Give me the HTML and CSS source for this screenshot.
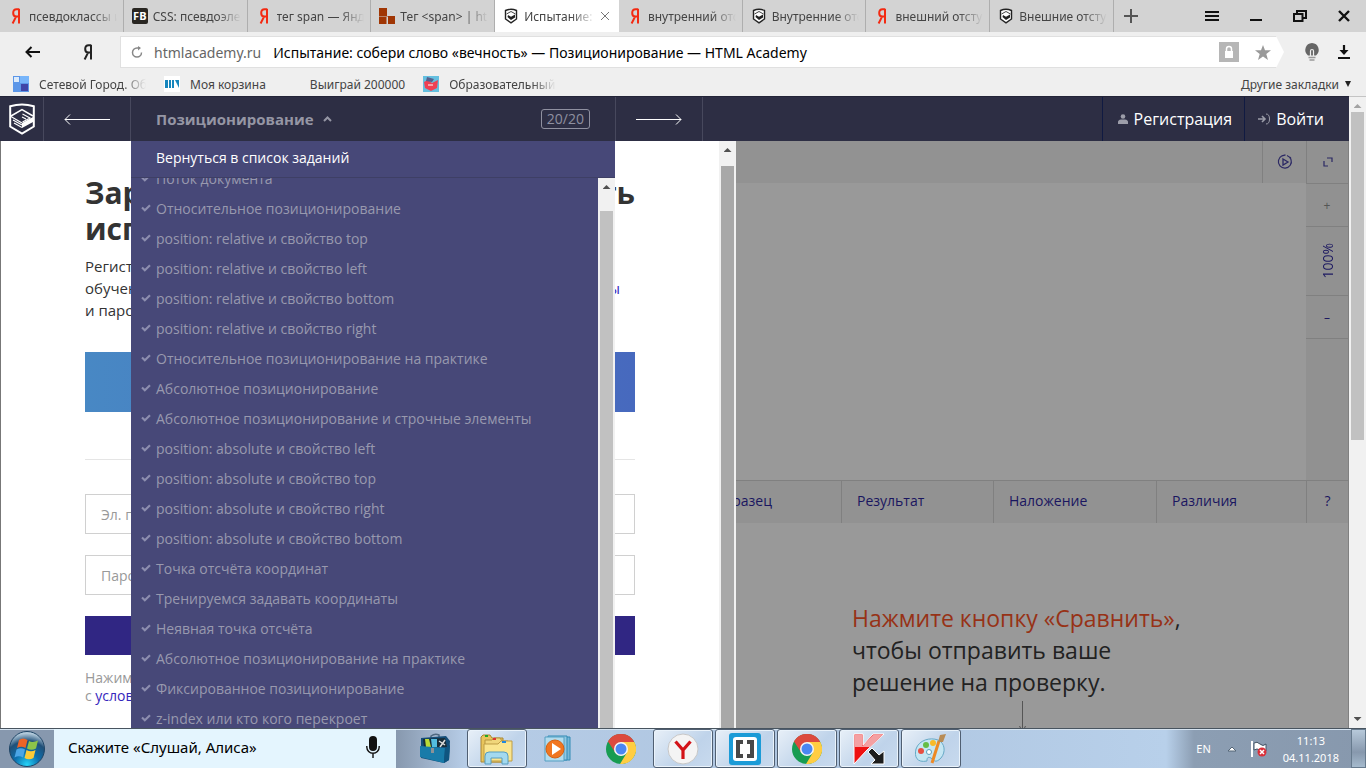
FILE: index.html
```html
<!DOCTYPE html>
<html lang="ru">
<head>
<meta charset="utf-8">
<title>Испытание: собери слово «вечность» — HTML Academy</title>
<link rel="stylesheet" href="styles.css">
</head>
<body>
<svg class="sprite" aria-hidden="true">
  <symbol id="ya" viewBox="0 0 10 16"><path d="M8 .8V15.5M8 1.2H5.6C3.3 1.2 2.2 2.7 2.2 4.9S3.4 8.4 5.4 8.4H8M5.2 8.4L1.6 15.5" fill="none" stroke="currentColor" stroke-width="2"/></symbol>
  <symbol id="academy" viewBox="0 0 26 32"><path d="M1.2 3.2Q13-.2 24.8 3.2V23.5L13 30.5 1.2 23.5Z" fill="none" stroke="currentColor" stroke-width="2"/><path d="M2 13L13 6.500 24 13" fill="none" stroke="currentColor" stroke-width="1.500"/><path d="M13 20L24 14V19L13 25Z" fill="currentColor"/><path d="M2 13.500L13 20M4 17L13 22M5 20L13 24.600M13.500 11L21 15 13.500 19M13 14L17 16" fill="none" stroke="currentColor" stroke-width="1.200"/></symbol>
  <symbol id="badge" viewBox="0 0 14 16"><path d="M1.500 2.500Q7 0 12.500 2.500V11L7 14.800 1.500 11Z" fill="#fff" stroke="#222" stroke-width="1.400"/><path d="M2.500 6L7 3.500 11.500 6" fill="none" stroke="#444"/><path d="M4 7L7 8.800 11 6.500V9.500L7 12 3.500 9Z" fill="#222"/></symbol>
  <symbol id="check" viewBox="0 0 10 8"><path d="M1 3.500L3.800 6.300 9 1.200" fill="none" stroke="currentColor" stroke-width="2.100"/></symbol>
  <symbol id="chrome" viewBox="0 0 30 30"><circle cx="15" cy="15" r="15" fill="#179c52"/><path d="M15 15L2 7.500A15 15 0 0 1 28 7.500Z" fill="#dc4a3e"/><path d="M15 8H28.300A15 15 0 0 1 14 30L21 18.500Z" fill="#ffcd42"/><path d="M2 7.500L9.500 19 15 8H28A15 15 0 0 0 2 7.500Z" fill="#dc4a3e"/><circle cx="15" cy="15" r="7" fill="#f5f5f5"/><circle cx="15" cy="15" r="5.500" fill="#4a87f2"/></symbol>
</svg>

<header class="browser">
  <div class="tabbar">
    <nav class="tabs" aria-label="Вкладки">
      <a class="tab" href="#"><svg class="fav ya"><use href="#ya"/></svg><span class="fade">псевдоклассы и</span></a>
      <a class="tab" href="#"><span class="fav fb">FB</span><span class="fade">CSS: псевдоэлем</span></a>
      <a class="tab" href="#"><svg class="fav ya"><use href="#ya"/></svg><span class="fade">тег span — Яндекс</span></a>
      <a class="tab" href="#"><svg class="fav" viewBox="0 0 16 16"><path d="M0 0H8V8H16V16H9V8.500H7.500V16H0V8.500H7.500V8H0Z" fill="#a03604"/></svg><span class="fade">Тег &lt;span&gt; | html</span></a>
      <a class="tab active" href="#"><svg class="fav"><use href="#badge"/></svg><span class="fade">Испытание: с</span><svg class="close" viewBox="0 0 10 10"><path d="M1 1L9 9M9 1L1 9" stroke="#777" fill="none"/></svg></a>
      <a class="tab" href="#"><svg class="fav ya"><use href="#ya"/></svg><span class="fade">внутренний отступ</span></a>
      <a class="tab" href="#"><svg class="fav"><use href="#badge"/></svg><span class="fade">Внутренние отст</span></a>
      <a class="tab" href="#"><svg class="fav ya"><use href="#ya"/></svg><span class="fade">внешний отступ</span></a>
      <a class="tab" href="#"><svg class="fav"><use href="#badge"/></svg><span class="fade">Внешние отступы</span></a>
    </nav>
    <button class="icon-btn plus" aria-label="Новая вкладка"><svg width="14" height="14" viewBox="0 0 14 14"><path d="M7 0V14M0 7H14" stroke="#555" stroke-width="2"/></svg></button>
    <div class="window-controls">
      <button class="icon-btn" aria-label="Меню"><svg width="14" height="12" viewBox="0 0 14 12"><path d="M0 2H14M0 6H14M0 10H14" stroke="#111" stroke-width="2"/></svg></button>
      <button class="icon-btn" aria-label="Свернуть"><svg width="14" height="12" viewBox="0 0 14 12"><path d="M1 10H13" stroke="#111" stroke-width="2"/></svg></button>
      <button class="icon-btn" aria-label="Окно"><svg width="14" height="12" viewBox="0 0 14 12"><path d="M1 4H9.500V11H1ZM4 4V1H13V8H10" fill="none" stroke="#111" stroke-width="2"/></svg></button>
      <button class="icon-btn" aria-label="Закрыть"><svg width="12" height="12" viewBox="0 0 12 12"><path d="M1 1L11 11M11 1L1 11" stroke="#111" stroke-width="2.400"/></svg></button>
    </div>
  </div>

  <div class="navbar">
    <button class="icon-btn" aria-label="Назад"><svg width="15" height="12" viewBox="0 0 15 12"><path d="M15 6H2M6.500 1L1.500 6 6.500 11" fill="none" stroke="#111" stroke-width="2"/></svg></button>
    <button class="icon-btn" aria-label="Яндекс"><svg class="ya-dark"><use href="#ya"/></svg></button>
    <div class="address">
      <svg width="12" height="12" viewBox="0 0 12 12"><path d="M10.500 6.500A4.500 4.500 0 1 1 6 2H9" fill="none" stroke="#888" stroke-width="1.500"/><path d="M7 0L10 2 7 4.500Z" fill="#888"/></svg>
      <span class="host">htmlacademy.ru</span>
      <span class="title">Испытание: собери слово «вечность» — Позиционирование — HTML Academy</span>
      <svg class="lock" viewBox="0 0 20 20"><path d="M0 0H20V20H0Z" fill="#b6b6b6"/><path d="M6 9H14V16H6Z" fill="#fff"/><path d="M7.500 9V7A2.500 2.500 0 0 1 12.500 7V9" fill="none" stroke="#fff" stroke-width="1.500"/></svg>
      <svg width="16" height="15" viewBox="0 0 16 15"><path d="M8 0L10 5.300H16L11.300 8.900 13 15 8 11.500 3 15 4.700 8.900 0 5.300H6Z" fill="#999"/></svg>
    </div>
    <button class="icon-btn" aria-label="Подсказка"><svg width="16" height="18" viewBox="0 0 16 18"><path d="M8 0A7 7 0 0 0 4 12.500H12A7 7 0 0 0 8 0Z" fill="#666"/><path d="M6.500 13V8A1.500 1.500 0 0 1 9.500 8V13" fill="none" stroke="#eee" stroke-width="1.200"/><path d="M4.500 14.500H11.500M5.500 17H10.500" stroke="#999" stroke-width="1.600"/></svg></button>
    <button class="icon-btn" aria-label="Загрузки"><svg width="12" height="14" viewBox="0 0 12 14"><path d="M6 0V7M0 13H12" stroke="#111" stroke-width="2.200"/><path d="M1.500 5H10.500L6 10Z" fill="#111"/></svg></button>
  </div>

  <nav class="bookmarks" aria-label="Закладки">
    <a class="mark" href="#"><svg class="fav" viewBox="0 0 16 16"><path d="M0 0H16V16H0Z" fill="#5b96e8"/><path d="M1 1H6V6H1Z" fill="#dcebfb"/><path d="M7 0H16V7H7Z" fill="#77b5fa"/><path d="M8 8H15V15H8Z" fill="#3f45a8"/></svg><span class="fade">Сетевой Город. Образ</span></a>
    <a class="mark" href="#"><svg class="fav" viewBox="0 0 16 16"><path d="M0 0H16V16H0Z" fill="#fff"/><path d="M1 4H4V12H1ZM5 4H7V12H5ZM8 4H10V12H8ZM11 4L15 12V4Z" fill="#1686bd"/></svg><span>Моя корзина</span></a>
    <a class="mark" href="#"><span class="fav"></span><span>Выиграй 200000</span></a>
    <a class="mark" href="#"><svg class="fav" viewBox="0 0 16 16"><path d="M0 0H16V16H0Z" fill="#64bfe0"/><path d="M1 6L5 4 9 7 15 4 14 12 8 15 2 12Z" fill="#ef4054"/><path d="M4 1L11 3 9 6 3 5Z" fill="#56608c"/><path d="M5 9H10" stroke="#fff"/></svg><span class="fade">Образовательный п</span></a>
    <a class="mark other" href="#">Другие закладки <svg width="6" height="6" viewBox="0 0 6 6"><path d="M0 0H6L3 6Z" fill="#222"/></svg></a>
  </nav>
</header>

<div class="viewport">
  <div class="site">
    <header class="course-bar">
      <a class="logo" href="#" aria-label="HTML Academy"><svg width="26" height="32"><use href="#academy"/></svg></a>
      <a class="arrow" href="#" aria-label="Предыдущее"><svg width="46" height="12" viewBox="0 0 46 12"><path d="M46 6.500H1M6 1.500L1 6.500 6 11.500" fill="none" stroke="#fff"/></svg></a>
      <div class="course">
        <button class="course-toggle"><span>Позиционирование</span><svg width="9" height="6" viewBox="0 0 9 6"><path d="M1 5L4.500 1.500 8 5" fill="none" stroke="#9596a4" stroke-width="2"/></svg></button>
        <span class="progress">20/20</span>
        <div class="menu">
          <a class="menu-back" href="#">Вернуться в список заданий</a>
          <div class="menu-body">
            <ul class="tasks">
              <li><a href="#"><svg><use href="#check"/></svg>Поток документа</a></li>
              <li><a href="#"><svg><use href="#check"/></svg>Относительное позиционирование</a></li>
              <li><a href="#"><svg><use href="#check"/></svg>position: relative и свойство top</a></li>
              <li><a href="#"><svg><use href="#check"/></svg>position: relative и свойство left</a></li>
              <li><a href="#"><svg><use href="#check"/></svg>position: relative и свойство bottom</a></li>
              <li><a href="#"><svg><use href="#check"/></svg>position: relative и свойство right</a></li>
              <li><a href="#"><svg><use href="#check"/></svg>Относительное позиционирование на практике</a></li>
              <li><a href="#"><svg><use href="#check"/></svg>Абсолютное позиционирование</a></li>
              <li><a href="#"><svg><use href="#check"/></svg>Абсолютное позиционирование и строчные элементы</a></li>
              <li><a href="#"><svg><use href="#check"/></svg>position: absolute и свойство left</a></li>
              <li><a href="#"><svg><use href="#check"/></svg>position: absolute и свойство top</a></li>
              <li><a href="#"><svg><use href="#check"/></svg>position: absolute и свойство right</a></li>
              <li><a href="#"><svg><use href="#check"/></svg>position: absolute и свойство bottom</a></li>
              <li><a href="#"><svg><use href="#check"/></svg>Точка отсчёта координат</a></li>
              <li><a href="#"><svg><use href="#check"/></svg>Тренируемся задавать координаты</a></li>
              <li><a href="#"><svg><use href="#check"/></svg>Неявная точка отсчёта</a></li>
              <li><a href="#"><svg><use href="#check"/></svg>Абсолютное позиционирование на практике</a></li>
              <li><a href="#"><svg><use href="#check"/></svg>Фиксированное позиционирование</a></li>
              <li><a href="#"><svg><use href="#check"/></svg>z-index или кто кого перекроет</a></li>
            </ul>
            <div class="scroll"><span class="up"></span><span class="thumb menu-thumb"></span></div>
          </div>
        </div>
      </div>
      <a class="arrow" href="#" aria-label="Следующее"><svg width="46" height="12" viewBox="0 0 46 12"><path d="M0 6.500H45M40 1.500L45 6.500 40 11.500" fill="none" stroke="#fff"/></svg></a>
      <div class="account">
        <a class="register" href="#"><svg width="10" height="10" viewBox="0 0 10 10"><circle cx="5" cy="2.500" r="2.300" fill="#9c9da9"/><path d="M0 10V8Q0 6 3 5.500H7Q10 6 10 8V10Z" fill="#9c9da9"/></svg>Регистрация</a>
        <a class="login" href="#"><svg width="12" height="12" viewBox="0 0 12 12"><path d="M0 6H7M4 3L7 6 4 9" fill="none" stroke="#9c9da9" stroke-width="1.600"/><path d="M8 1Q11.500 1 11.500 6T8 11" fill="none" stroke="#9c9da9"/></svg>Войти</a>
      </div>
    </header>

    <div class="stage">
      <section class="signup">
        <div class="signup-content">
          <h1><span>Зарегистрируйтесь</span><span>начать</span></h1>
          <h1>испытание</h1>
          <div class="lead">
            <p>Регистрация</p>
            <p class="spread"><span>обучение</span><a href="#">курсы</a></p>
            <p>и пароль</p>
          </div>
          <button class="social" aria-label="Войти через соцсеть"></button>
          <hr>
          <form>
            <input type="email" placeholder="Эл. почта" aria-label="Эл. почта">
            <input type="password" placeholder="Пароль" aria-label="Пароль">
            <button class="submit" type="button" aria-label="Зарегистрироваться"></button>
          </form>
          <p class="terms">Нажимая<br>с <a href="#">условиями</a></p>
        </div>
        <div class="scroll"><span class="up"></span><span class="thumb panel-thumb"></span></div>
      </section>
      <section class="workspace">
        <div class="preview">
          <div class="preview-main">
            <div class="toolbar"><button class="tool play" aria-label="Запустить"><svg width="16" height="16" viewBox="0 0 16 16"><path d="M10 1.500A6.500 6.500 0 1 1 5 1.800M5 1.800L8.500 .8M13 3L14 4.500" fill="none" stroke="#2b2864" stroke-width="1.200"/><path d="M6 5L11 8 6 11Z" fill="none" stroke="#2b2864" stroke-width="1.300"/></svg></button></div>
          </div>
          <div class="zoombar">
            <button class="tool expand" aria-label="Развернуть"><svg width="10" height="10" viewBox="0 0 10 10"><path d="M4 1H9V5M1 4V9H5" fill="none" stroke="#2b2864" stroke-width="1.200"/></svg></button>
            <button class="tool step muted">+</button>
            <button class="tool percent"><span>100%</span></button>
            <button class="tool step">–</button>
          </div>
        </div>
        <nav class="views" aria-label="Просмотр">
          <a class="view sample" href="#">Образец</a>
          <a class="view result" href="#">Результат</a>
          <a class="view over" href="#">Наложение</a>
          <a class="view diff" href="#">Различия</a>
          <a class="view help" href="#">?</a>
        </nav>
        <div class="hint">
          <p><em>Нажмите кнопку «Сравнить»</em>,<br>чтобы отправить ваше<br>решение на проверку.</p>
          <svg width="8" height="32" viewBox="0 0 8 32"><path d="M4.500 0V32M1.500 25L4.500 31 7.500 25" fill="none" stroke="#555"/></svg>
        </div>
      </section>
    </div>
  </div>
  <div class="scroll page-scroll"><span class="up pale"></span><span class="thumb page-thumb"></span><span class="down"></span></div>
</div>

<footer class="taskbar">
  <button class="start" aria-label="Пуск"><svg width="38" height="38" viewBox="0 0 38 38"><defs><radialGradient id="orb" cx=".5" cy=".95" r=".9"><stop offset="0" stop-color="#25d4f8"/><stop offset=".4" stop-color="#0c6fae"/><stop offset=".75" stop-color="#205078"/><stop offset="1" stop-color="#b4cbdc"/></radialGradient></defs><circle cx="19" cy="19" r="17.500" fill="url(#orb)" stroke="#1f4566"/><path d="M11 10Q15 7 19.500 10L17.500 18Q13 15.500 9 18Z" fill="#ec6427"/><path d="M21 11Q25 13 30 10.500L28 18.500Q23.500 21 19 18.500Z" fill="#8cc44a"/><path d="M8.500 19.500Q13 17 17 19.500L15 27.500Q11 25 6.500 27.500Z" fill="#4ba5e6"/><path d="M18.500 20Q23 22.500 27.500 20L25.500 28Q21 30.500 16.500 28Z" fill="#fccb38"/></svg></button>
  <button class="alice"><span>Скажите «Слушай, Алиса»</span><svg width="14" height="22" viewBox="0 0 14 22"><rect x="3" y="0" width="8" height="15" rx="4" fill="#111"/><path d="M.8 10V11A6.200 6.200 0 0 0 13.200 11V10M7 17V22" fill="none" stroke="#111" stroke-width="1.400"/></svg></button>
  <div class="apps">
    <button class="app" aria-label="Инструменты"><svg width="32" height="32" viewBox="0 0 32 32"><path d="M12 5V3Q16 0 20 2V5" fill="none" stroke="#4e6880" stroke-width="1.500"/><path d="M2 5L27 3 31 8 30 27 25 30 2 25Z" fill="#144e78"/><path d="M4 6L26 5 28 14H5Z" fill="#182d38"/><path d="M6 6H10L12 14H7Z" fill="#b9da37"/><path d="M12 6H18V14H13Z" fill="#53bddf"/><path d="M20 8L26 12M26 7L21 14" stroke="#ddd" stroke-width="1.500"/><path d="M1 13L26 15 25 30 1 24Z" fill="#187ba9"/><path d="M26 15L31 12 30 27 25 30Z" fill="#0f5580"/><path d="M12 15H15V20H12Z" fill="#8b9296"/></svg></button>
    <button class="app open" aria-label="Проводник"><svg width="34" height="32" viewBox="0 0 34 32"><path d="M1 29V4L3 2H10L12 5H23V29Z" fill="#e8c55c" stroke="#a98634"/><path d="M5 29V7H12L14 5H20L22 8H28V29Z" fill="#f0d67b" stroke="#b7953e"/><path d="M4 28V11H18L21 8H32V28Z" fill="#fae58e" stroke="#be9d46"/><path d="M5 3H8" stroke="#23a823" stroke-width="2"/><path d="M13 6H16" stroke="#d33" stroke-width="2"/><path d="M22 9H26" stroke="#28d" stroke-width="2"/><path d="M5 31V23Q5 19 9 19H24Q28 19 28 23V31H22V25H11V31Z" fill="#a3d9ef" stroke="#579dc0"/></svg></button>
    <button class="app" aria-label="Проигрыватель"><svg width="32" height="32" viewBox="0 0 32 32"><path d="M8 4H27V27H8Z" fill="#76b7d8" stroke="#338bb4"/><path d="M5 3H24V27H5Z" fill="#91c8e2" stroke="#338bb4"/><path d="M2 4H21V28H2Z" fill="#b2dcee" stroke="#559fc2"/><circle cx="12" cy="16" r="9" fill="#f17620" stroke="#d46012"/><path d="M9 10L18 16 9 22Z" fill="#fff"/></svg></button>
    <button class="app" aria-label="Chrome"><svg width="30" height="30"><use href="#chrome"/></svg></button>
    <button class="app open" aria-label="Яндекс.Браузер"><svg width="32" height="32" viewBox="0 0 32 32"><circle cx="16" cy="16" r="15" fill="#f4f4f4" stroke="#c7c7c7"/><path d="M8.500 8.500L16 17 23.500 8.500M16 16V26" fill="none" stroke="#d31318" stroke-width="3.200"/></svg></button>
    <button class="app open" aria-label="Brackets"><svg width="32" height="32" viewBox="0 0 32 32"><rect width="32" height="32" rx="3" fill="#1b9bd7"/><rect x="4" y="4" width="24" height="24" rx="3" fill="#fff"/><path d="M14 9H9V23H14M18 9H23V23H18" fill="none" stroke="#484848" stroke-width="4"/></svg></button>
    <button class="app open" aria-label="Chrome"><svg width="30" height="30"><use href="#chrome"/></svg></button>
    <button class="app open" aria-label="Kaspersky"><svg width="32" height="32" viewBox="0 0 32 32"><path d="M1 1H10V12L20 1H31L14 17 1 31Z" fill="#ee1111" stroke="#fff"/><path d="M1.500 1.500H9.500V13L20.500 1.500H30L17 14H1.500Z" fill="#f4a0a2"/><path d="M15 19L19 15 26 22 31 18V31H18L22 27Z" fill="#1d1d1d" stroke="#fff"/></svg></button>
    <button class="app open" aria-label="Paint"><svg width="32" height="32" viewBox="0 0 32 32"><path d="M12 28C2 30-1 24 1 16 4 7 15 4 23 7 30 10 31 19 26 25 20 31 19 27 16 25 12 23 12 26 12 28Z" fill="#c5e6f3" stroke="#66a9c6"/><circle cx="6" cy="18" r="3" fill="#e84f42"/><circle cx="11" cy="12" r="3" fill="#65bd45"/><circle cx="18" cy="10" r="3" fill="#f8ba29"/><circle cx="14" cy="19" r="2.500" fill="#fff" stroke="#5b9ebc"/><path d="M17 30L24 8" stroke="#ed8a25" stroke-width="3"/><path d="M23 9L25 2 31 1 28 9Z" fill="#b88c56"/></svg></button>
  </div>
  <div class="tray">
    <span>EN</span>
    <svg width="10" height="6" viewBox="0 0 10 6"><path d="M1 5L5 1 9 5Z" fill="#fff" stroke="#567"/></svg>
    <svg width="16" height="16" viewBox="0 0 16 16"><path d="M1 0V16" stroke="#fff" stroke-width="2"/><path d="M3 2Q6 0 9 3T15 3V10Q12 11 9 9T3 9Z" fill="#fff" stroke="#456"/><circle cx="11" cy="11" r="4.500" fill="#d9303a"/><path d="M9 9L13 13M13 9L9 13" stroke="#fff" stroke-width="1.500"/></svg>
    <time>11:13<br>04.11.2018</time>
    <button class="desktop" aria-label="Показать рабочий стол"></button>
  </div>
</footer>
</body>
</html>
```
FILE: styles.css
```css
* { box-sizing: border-box; }
html, body { height: 100%; margin: 0; }
body { display: flex; flex-direction: column; overflow: hidden; font-family: "Noto Sans", "Open Sans", sans-serif; font-size: 12px; color: #333; }
a { color: inherit; text-decoration: none; }
button { margin: 0; padding: 0; border: 0; background: none; font: inherit; color: inherit; cursor: pointer; }
svg { display: block; flex: none; }
p { margin: 0; }
.sprite { position: absolute; width: 0; height: 0; }

.browser { flex: none; background: #efefef; }
.tabbar { display: flex; height: 32px; background: #d3d3d3; }
.tabs { display: flex; flex: 0 1 1114px; min-width: 0; }
.tab { display: flex; flex: 1 1 0; align-items: center; gap: 5px; min-width: 0; padding: 0 6px 0 8px; border-right: 1px solid #aeaeae; color: #444; }
.tab.active { background: #fff; border-color: #fff; }
.fade { flex: 1; min-width: 0; overflow: hidden; white-space: nowrap; -webkit-mask-image: linear-gradient(to right, #000 calc(100% - 24px), transparent); mask-image: linear-gradient(to right, #000 calc(100% - 24px), transparent); }
.fav { flex: none; width: 16px; height: 16px; }
.fav.ya { color: #f32a12; }
.fb { border-radius: 2px; background: #292622; color: #fff; font-size: 11px; font-weight: 700; line-height: 16px; text-align: center; }
.close { width: 10px; height: 10px; margin-right: 2px; }
.icon-btn { display: flex; align-items: center; justify-content: center; width: 44px; }
.plus { width: 34px; }
.window-controls { display: flex; margin-left: auto; }

.navbar { display: flex; height: 40px; align-items: center; padding-right: 6px; }
.navbar .icon-btn { height: 32px; width: 32px; }
.navbar .icon-btn:first-child { margin-left: 16px; }
.navbar .icon-btn:nth-child(2) { margin: 0 16px 0 24px; }
.ya-dark { width: 10px; height: 16px; color: #222; }
.address { display: flex; flex: 1; align-items: center; height: 32px; min-width: 0; margin-right: 12px; padding: 0 13px 0 10px; border: 1px solid #e0e0e0; border-right: 0; background: #fff; clip-path: polygon(0 0, calc(100% - 8px) 0, 100% 50%, calc(100% - 8px) 100%, 0 100%); font-size: 14px; white-space: nowrap; }
.host { margin: 0 12px 0 11px; color: #666; }
.title { flex: 1; overflow: hidden; color: #000; }
.lock { width: 20px; height: 20px; margin-right: 16px; }

.bookmarks { display: flex; height: 24px; padding: 0 15px 0 13px; color: #444; }
.mark { display: flex; align-items: center; gap: 10px; margin-right: 18px; white-space: nowrap; }
.mark:first-child, .mark:nth-child(4) { width: 133px; }
.mark.other { gap: 6px; margin: 0 0 0 auto; }

.viewport { display: flex; flex: 1; min-height: 0; font-family: "Open Sans", "Noto Sans", sans-serif; }
.site { display: flex; flex: 1; flex-direction: column; min-width: 0; }
.course-bar { display: flex; flex: none; height: 45px; border-top: 1px solid #232438; background: #2d2e44; }
.logo, .arrow { display: flex; align-items: center; justify-content: center; border-right: 1px solid #47485d; color: #fff; }
.logo { width: 44px; }
.arrow { width: 87px; }
.course { position: relative; display: flex; flex: 0 1 485px; align-items: center; justify-content: space-between; padding: 0 25px; border-right: 1px solid #47485d; }
.course-toggle { display: flex; align-items: center; gap: 9px; color: #9596a4; font-size: 15px; font-weight: 700; }
.progress { padding: 0 5px; border: 1px solid #8f90a0; border-radius: 3px; color: #8f90a0; font-size: 14px; line-height: 18px; }
.menu { position: absolute; z-index: 2; top: 100%; left: 0; right: 0; display: flex; flex-direction: column; height: calc(100vh - 181px); background: #474878; font-size: 14px; }
.menu-back { flex: none; height: 37px; padding-left: 25px; border-bottom: 1px solid #3e3f65; color: #fff; line-height: 34px; }
.menu-body { display: flex; flex: 1; min-height: 0; overflow: hidden; }
.tasks { flex: 1; margin: -14px 0 0; padding: 0; list-style: none; }
.tasks a { display: flex; align-items: center; height: 30px; padding: 0 0 2px 10px; color: #9899ae; white-space: nowrap; }
.tasks svg { width: 10px; height: 8px; margin-right: 5px; color: #8d8eaf; }
.account { display: flex; margin-left: auto; color: #fff; font-size: 16px; }
.account a { display: flex; align-items: center; gap: 6px; border-left: 1px solid #101a42; }
.register { padding: 0 12px 0 15px; }
.login { padding: 0 25px 0 13px; }

.scroll { display: flex; flex: none; flex-direction: column; width: 17px; background: #f1f1f1; }
.up, .down { flex: none; width: 8px; height: 4px; margin: 7px auto 14px; background: #505050; clip-path: polygon(50% 0, 100% 100%, 0 100%); }
.up.pale { margin: 7px auto 4px; background: #a3a3a3; }
.down { margin: auto auto 7px; clip-path: polygon(0 0, 100% 0, 50% 100%); }
.thumb { width: 13px; margin: 0 auto; background: #c1c1c1; }
.menu-thumb { flex: 1; margin-top: 8px; }
.panel-thumb { flex: 1; background: #a8a8a8; }
.page-thumb { height: 52%; }
.page-scroll { border-top: 1px solid #c4c4c4; }

.stage { position: relative; flex: 1; min-height: 0; }
.signup { position: absolute; z-index: 1; top: 0; bottom: 0; left: 0; display: flex; width: 736px; border-left: 1px solid #777; background: #fff; overflow: hidden; }
.signup-content { flex: 1; padding: 34px 84px 0; }
h1 { display: flex; justify-content: space-between; margin: 0; font-size: 30px; line-height: 36px; color: #333; }
.lead { padding: 8px 15px 31px 0; font-size: 15px; line-height: 22px; }
.spread { display: flex; justify-content: space-between; }
.signup a { color: #3527bd; }
.social { width: 100%; height: 60px; background: linear-gradient(90deg, #4888c4, #4769be); display: block; }
hr { margin: 47px 0 34px; border: 0; border-top: 1px solid #e5e5e5; }
form { display: grid; gap: 21px; }
input { width: 100%; height: 40px; padding: 0 15px; border: 1px solid #d0d0d0; background: #fff; font: inherit; font-size: 14px; border-radius: 0; }
input::placeholder { color: #999; opacity: 1; }
.submit { height: 39px; background: #302683; }
.terms { margin-top: 14px; color: #999; font-size: 14px; line-height: 18px; }

.workspace { display: flex; flex-direction: column; height: 100%; border-right: 1px solid #808080; background: #999; color: #1a1660; overflow: hidden; }
.preview { display: flex; flex: 0 0 339px; }
.preview-main { flex: 1; }
.toolbar { display: flex; justify-content: flex-end; height: 42px; background: #929292; }
.tool { display: flex; align-items: center; justify-content: center; }
.play { width: 44px; border-left: 1px solid #808080; }
.zoombar { width: 42px; background: #919191; }
.zoombar .tool { width: 100%; height: 43px; border-bottom: 1px solid #808080; }
.zoombar .expand { border-left: 1px solid #808080; }
.zoombar .percent { height: 69px; font-size: 14px; }
.percent span { writing-mode: vertical-rl; transform: rotate(180deg); }
.zoombar .muted { color: #555; }
.views { display: flex; flex: none; justify-content: flex-end; height: 43px; border-top: 1px solid #808080; background: #929292; font-size: 14px; }
.view { padding-left: 15px; border-left: 1px solid #808080; line-height: 40px; }
.sample { width: 144px; }
.result { width: 152px; }
.over { width: 163px; }
.diff { width: 150px; }
.help { width: 42px; padding: 0; text-align: center; }
.hint { display: flex; flex-direction: column; align-self: flex-end; align-items: center; width: 496px; padding: 79px 156px 0 0; color: #222; font-size: 23px; line-height: 32px; white-space: nowrap; }
.hint em { font-style: normal; color: #973216; }
.hint p { width: 100%; margin-bottom: 3px; }

.taskbar { display: flex; flex: none; height: 40px; border-top: 1px solid #48545f; background: linear-gradient(90deg, #8798ae 0, #8798ae 396px, #b6cce6 464px, #aec5e0 60%, #b8d0ea calc(100% - 200px), #8c9eb3 calc(100% - 172px), #8798ad 100%); box-shadow: inset 0 1px #d5e3f0; }
.start { display: flex; align-items: center; justify-content: center; width: 54px; }
.alice { display: flex; flex: 0 1 342px; align-items: center; justify-content: space-between; padding: 0 16px 3px 14px; background: #e4f5fe; color: #000; font-size: 15px; }
.apps { display: flex; gap: 2px; padding-left: 9px; }
.app { display: flex; align-items: center; justify-content: center; width: 60px; border: 1px solid transparent; }
.app.open { border-color: #505f72; border-radius: 3px; background: linear-gradient(135deg, #e8f0f8, #bfd3ea 60%, #c8daee); box-shadow: inset 0 0 0 1px #eaf3fb; }
.tray { display: flex; align-items: center; gap: 16px; margin-left: auto; color: #fff; font-size: 11px; }
.tray time { line-height: 17px; text-align: center; }
.tray svg + svg { margin-left: -2px; }
.desktop { align-self: stretch; width: 15px; margin-left: -4px; border: 1px solid #667a8d; background: linear-gradient(#b7c9da, #8798ad 60%, #a5bacd); }
```
